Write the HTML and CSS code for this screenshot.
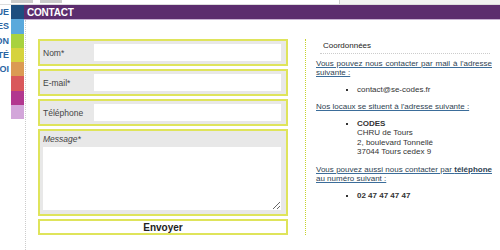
FILE: index.html
```html
<!DOCTYPE html>
<html lang="fr">

<head>
    <meta charset="UTF-8">
    <title>Contact</title>
    <link rel="stylesheet" href="styles.css">
</head>

<body>
    <div class="topbar">
        <span class="tab"></span>
        <span class="tab"></span>
        <div class="topbar-right"></div>
    </div>
    <div class="page">
        <ul class="menu">
            <li><span class="label">PRATIQUE</span><span class="swatch c1"></span></li>
            <li><span class="label">RESSOURCES</span><span class="swatch c2"></span></li>
            <li><span class="label">FORMATION</span><span class="swatch c3"></span></li>
            <li><span class="label">SANTÉ</span><span class="swatch c4"></span></li>
            <li><span class="label">EMPLOI</span><span class="swatch c5"></span></li>
            <li><span class="label"></span><span class="swatch c6"></span></li>
            <li><span class="label"></span><span class="swatch c7"></span></li>
            <li><span class="label"></span><span class="swatch c8"></span></li>
        </ul>
        <div class="main">
            <h1 class="title">CONTACT</h1>
            <div class="content">
                <div class="row">
                    <form class="contact-form">
                        <div class="field">
                            <label>Nom*</label>
                            <input type="text">
                        </div>
                        <div class="field">
                            <label>E-mail*</label>
                            <input type="text">
                        </div>
                        <div class="field">
                            <label>Téléphone</label>
                            <input type="text">
                        </div>
                        <div class="field field-message">
                            <label>Message*</label>
                            <textarea></textarea>
                        </div>
                        <button type="button" class="send">Envoyer</button>
                    </form>
                    <div class="infos">
                        <h2 class="infos-title">Coordonnées</h2>
                        <p class="intro">Vous pouvez nous contacter par mail à l'adresse suivante :</p>
                        <ul class="list">
                            <li>contact@se-codes.fr</li>
                        </ul>
                        <p class="intro">Nos locaux se situent à l'adresse suivante :</p>
                        <ul class="list">
                            <li><b>CODES</b><br>CHRU de Tours<br>2, boulevard Tonnellé<br>37044 Tours cedex 9</li>
                        </ul>
                        <p class="intro">Vous pouvez aussi nous contacter par <b>téléphone</b> au numéro suivant :</p>
                        <ul class="list">
                            <li><b>02 47 47 47 47</b></li>
                        </ul>
                    </div>
                </div>
            </div>
        </div>
    </div>
</body>

</html>
```

FILE: styles.css
```css
* {
    margin: 0;
    padding: 0;
}

body {
    font-family: "Liberation Sans", Arial, sans-serif;
    font-size: 8px;
    color: #333;
    background-color: #fff;
    width: 500px;
    height: 250px;
    overflow: hidden;
}

.topbar {
    display: flex;
    height: 4px;
    border-bottom: 1px solid #ddd;
}

.topbar .tab {
    width: 22px;
    height: 3px;
    margin-left: 11px;
    background-color: #ccc;
}

.topbar .tab + .tab {
    margin-left: 7px;
}

.topbar-right {
    margin-left: auto;
    width: 160px;
    background-color: #f1f1f1;
    border-left: 1px solid #ccc;
}

.page {
    display: flex;
    height: 245px;
}

.menu {
    list-style: none;
    width: 24px;
    flex-shrink: 0;
}

.menu li {
    display: flex;
    height: 14.3px;
}

.menu .label {
    display: flex;
    justify-content: flex-end;
    align-items: center;
    width: 11px;
    overflow: hidden;
    white-space: nowrap;
    font-size: 9px;
    font-weight: bold;
    color: #2a65a3;
    padding-right: 2px;
    box-sizing: border-box;
}

.menu .swatch {
    width: 13px;
}

.c1 { background-color: #1d4e7f; }
.c2 { background-color: #5aa9dc; }
.c3 { background-color: #a8d23f; }
.c4 { background-color: #d6d33e; }
.c5 { background-color: #db9a53; }
.c6 { background-color: #d9585b; }
.c7 { background-color: #b2388f; }
.c8 { background-color: #d3a6da; }

.main {
    flex: 1;
    display: flex;
    flex-direction: column;
}

.title {
    height: 14px;
    line-height: 15px;
    padding-left: 3px;
    background-color: #5c2d6e;
    border-bottom: 1px solid #c9b3d3;
    color: #fff;
    font-size: 10px;
    font-weight: bold;
    letter-spacing: -0.2px;
}

.content {
    flex: 1;
    margin-left: 1px;
    padding: 19px 0 0 12px;
    border-left: 1px dotted #ccc;
}

.row {
    display: flex;
    align-items: stretch;
}

.contact-form {
    display: flex;
    flex-direction: column;
    gap: 3px;
    width: 250px;
}

.field {
    display: flex;
    align-items: center;
    height: 27px;
    padding: 0 5px 0 3px;
    border: 2px solid #dfe45b;
    background-color: #e8e8e8;
    box-sizing: border-box;
}

.field label {
    width: 51px;
    font-size: 8.5px;
    color: #444;
}

.field input {
    flex: 1;
    height: 17px;
    border: 0;
    background-color: #fff;
    outline: none;
}

.field-message {
    flex-direction: column;
    align-items: stretch;
    height: 87px;
    padding: 3px 5px 4px 3px;
}

.field-message label {
    font-style: italic;
    height: 13px;
    line-height: 10px;
}

.field-message textarea {
    flex: 1;
    border: 0;
    background-color: #fff;
    resize: vertical;
}

.send {
    height: 16px;
    border: 2px solid #dfe45b;
    background-color: #fff;
    font-family: "Liberation Sans", Arial, sans-serif;
    font-size: 10px;
    font-weight: bold;
    color: #222;
}

.infos {
    width: 176px;
    margin-left: 17px;
    padding-left: 10px;
    border-left: 1px dotted #c5d22e;
    line-height: 9.5px;
}

.infos-title {
    margin: 0 2px 5px 4px;
    padding: 2px 0 2px 3px;
    border-bottom: 1px dotted #ccc;
    font-size: 8px;
    font-weight: normal;
    color: #222;
}

.intro {
    text-align: justify;
    text-decoration: underline;
    text-decoration-color: #3b6d9a;
    color: #2e3f52;
}

.list {
    list-style: square;
    margin: 7px 0 8px 41px;
    color: #333;
}
```
